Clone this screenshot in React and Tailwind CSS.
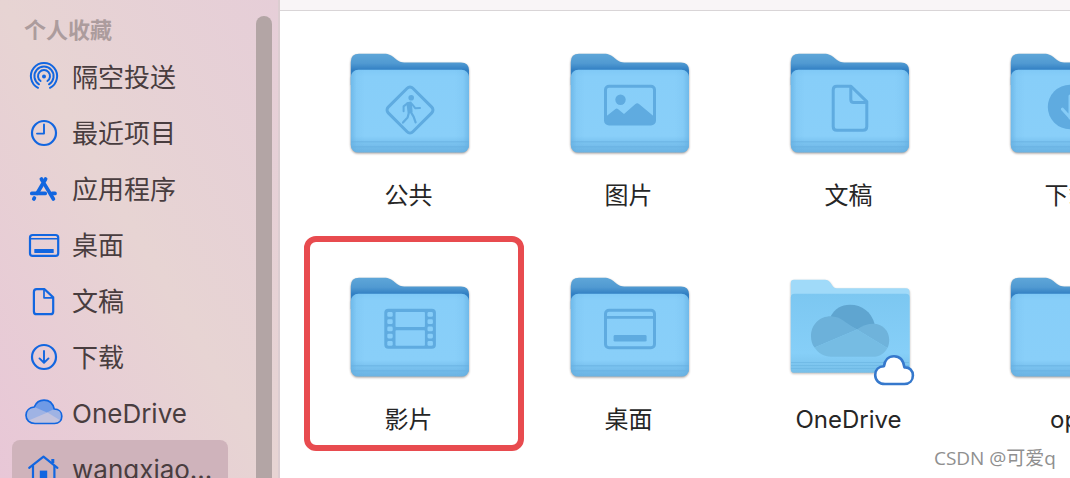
import React, { useState } from "react";
import clsx from "clsx";

const FONT =
  "font-['Inter','Noto_Sans_CJK_SC',sans-serif]";

const CLOUD =
  "M11 31.5 C5.5 31.5 2 28 2 23.3 C2 18.6 5.5 15.4 10.3 15 C12 10.8 15.5 8.2 20 8.2 C25 8.2 28.8 11.3 30.2 17 C34.8 17 37.8 20 37.8 24.2 C37.8 28.5 34.8 31.5 30.5 31.5 Z";

/* Sidebar icons, all drawn on a 40 x 40 board */
const SIDEBAR_ICONS = {
  airdrop: (
    <g strokeWidth="2">
      <path d="M14 31.8 A13.1 13.1 0 1 1 26 31.8" />
      <path d="M15 28.3 A9.6 9.6 0 1 1 25 28.3" />
      <path d="M16.6 25 A6 6 0 1 1 23.4 25" />
      <circle cx="20" cy="20.4" r="2" fill="currentColor" stroke="none" />
    </g>
  ),
  recents: (
    <g>
      <circle cx="20" cy="21" r="12" />
      <path d="M20 12.4 V21.6 H13" strokeWidth="1.9" />
    </g>
  ),
  apps: (
    <g strokeWidth="3.7">
      <path d="M21.6 11 L13.2 25.3" />
      <path d="M10.4 30 L9.8 31" />
      <path d="M17.4 11 L18.4 12.8 M20.6 16.4 L29.4 31" />
      <path d="M7.8 25.4 H21.2 M28.2 25.4 H31" />
    </g>
  ),
  desktop: (
    <g>
      <rect x="6" y="11" width="28.2" height="20.8" rx="2.6" />
      <path d="M6 14.8 H34" strokeWidth="1.6" />
      <rect x="10.3" y="25" width="19.4" height="4" rx="0.5" fill="currentColor" stroke="none" />
    </g>
  ),
  document: (
    <g>
      <path d="M12.6 9.2 H20.6 L29.2 17.4 V31.4 Q29.2 34.2 26.6 34.2 H12.6 Q9.9 34.2 9.9 31.4 V12 Q9.9 9.2 12.6 9.2 Z" />
      <path d="M20 9.6 V17.8 H28.8" strokeWidth="1.7" />
    </g>
  ),
  download: (
    <g>
      <circle cx="20" cy="21" r="12" />
      <path d="M20 15 V26.6 M15.5 22.4 L20 26.8 L24.5 22.4" strokeWidth="1.9" />
    </g>
  ),
  onedrive: (
    <g>
      <path d={CLOUD} fill="#9fb3e4" stroke="none" />
      <path d="M10.3 15 C12 10.8 15.5 8.2 20 8.2 C25 8.2 28.8 11.3 30.2 17 L23 20.5 Z" fill="#6f9ae6" stroke="none" />
      <path d="M4 28.8 L23.5 20.4 L36.5 28.4 Q34.5 31.5 30.5 31.5 H11 Q6.5 31.5 4 28.8 Z" fill="#c3c3de" stroke="none" />
      <path d={CLOUD} strokeWidth="1.7" />
    </g>
  ),
  home: (
    <g>
      <path d="M5.2 19.8 L19.5 8.6 L33.4 19.8" />
      <path d="M9 18 V36 M30.4 18 V36" />
      <path d="M28.8 15 V11" strokeWidth="3" strokeLinecap="butt" />
      <rect x="15.8" y="22.6" width="7.4" height="14" fill="currentColor" stroke="none" />
    </g>
  ),
};

const FAVORITES = [
  { icon: "airdrop", label: "隔空投送" },
  { icon: "recents", label: "最近项目" },
  { icon: "apps", label: "应用程序" },
  { icon: "desktop", label: "桌面" },
  { icon: "document", label: "文稿" },
  { icon: "download", label: "下载" },
  { icon: "onedrive", label: "OneDrive" },
  { icon: "home", label: "wangxiao..." },
];

/* Marks stamped on the folder fronts, on the folder's 120 x 104 board */
const FOLDER_MARKS = {
  walk: (
    <g>
      <rect x="42.6" y="39.6" width="34.8" height="34.8" rx="4" transform="rotate(45 60 57)" strokeWidth="3" />
      <circle cx="61.2" cy="44.8" r="2.8" fill="currentColor" stroke="none" />
      <path d="M57.4 50.2 L60.8 49.4 L61.6 58.6 L58.6 59.4 Z" fill="currentColor" strokeWidth="2" />
      <path d="M57.4 50.4 L53.6 53.4 V58.2 M62 51 L65.2 55.2 L70 55" strokeWidth="2" />
      <path d="M58.8 60 L57.6 64.4 L53 69.6 M61 59.4 L63.6 63.6 L65.6 69.4" strokeWidth="2.2" />
    </g>
  ),
  picture: (
    <g>
      <rect x="35.5" y="33.2" width="49" height="37.8" rx="3.5" strokeWidth="3" />
      <circle cx="50.5" cy="46.8" r="5.2" fill="currentColor" stroke="none" />
      <path d="M36 63.5 L45.2 56.2 Q46.8 55 48.2 56.3 L54 61 L65.4 51 Q67.2 49.6 69 51 L84 63.5 V70.5 H36 Z" fill="currentColor" stroke="none" />
    </g>
  ),
  document: (
    <g>
      <path d="M46.8 33.2 H61 L76.8 48.6 V73.4 Q76.8 77.2 73 77.2 H46.8 Q43.2 77.2 43.2 73.4 V37 Q43.2 33.2 46.8 33.2 Z" />
      <path d="M60.8 34 V46.6 Q60.8 49.6 63.8 49.6 H76" />
    </g>
  ),
  download: (
    <g>
      <circle cx="60" cy="54" r="22.2" fill="currentColor" stroke="none" />
      <path d="M60 43 V65 M52.5 56.2 L60 64.5 L67.5 56.2" stroke="#86ccf7" strokeWidth="3" />
    </g>
  ),
  film: (
    <g>
      <rect x="34.3" y="31.8" width="51.6" height="40" rx="4" fill="currentColor" stroke="none" />
      <g fill="#88cef9" stroke="none">
        {[35, 42.3, 49.5, 56.7, 64].map((y) => (
          <React.Fragment key={y}>
            <rect x="37.3" y={y} width="5.4" height="4.8" rx="1.4" />
            <rect x="77.5" y={y} width="5.4" height="4.8" rx="1.4" />
          </React.Fragment>
        ))}
        <rect x="45.5" y="35" width="29.4" height="15" rx="0.8" />
        <rect x="45.5" y="53.3" width="29.4" height="15.4" rx="0.8" />
      </g>
    </g>
  ),
  desktop: (
    <g>
      <rect x="35.5" y="33.2" width="49" height="37.6" rx="3.5" strokeWidth="3" />
      <path d="M36 40.4 H84" strokeWidth="2.6" />
      <rect x="43.6" y="58" width="33" height="6.6" rx="1.4" fill="currentColor" stroke="none" />
    </g>
  ),
};

const FOLDERS = [
  { id: "public", mark: "walk", label: "公共" },
  { id: "pictures", mark: "picture", label: "图片" },
  { id: "documents", mark: "document", label: "文稿" },
  { id: "downloads", mark: "download", label: "下载" },
  { id: "movies", mark: "film", label: "影片", marked: true },
  { id: "desktop", mark: "desktop", label: "桌面" },
  { id: "onedrive", label: "OneDrive" },
  { id: "opt", label: "opt" },
];

const FolderDefs = () => (
  <svg className="absolute size-0" aria-hidden="true">
    <defs>
      <linearGradient id="back" x1="0" y1="0" x2="0" y2="1">
        <stop offset="0" stopColor="#5ea6d8" />
        <stop offset="0.3" stopColor="#519ad2" />
        <stop offset="0.52" stopColor="#317fc3" />
        <stop offset="1" stopColor="#317fc3" />
      </linearGradient>
      <linearGradient id="front" x1="0" y1="0" x2="0" y2="1">
        <stop offset="0" stopColor="#80c9f6" />
        <stop offset="0.08" stopColor="#87cef9" />
        <stop offset="0.8" stopColor="#89cff9" />
        <stop offset="0.86" stopColor="#7dc5f2" />
        <stop offset="1" stopColor="#6ab2e2" />
      </linearGradient>
      <linearGradient id="edges" x1="0" y1="0" x2="1" y2="0">
        <stop offset="0" stopColor="#5fabdf" stopOpacity="0.6" />
        <stop offset="0.05" stopColor="#5fabdf" stopOpacity="0.12" />
        <stop offset="0.12" stopColor="#5fabdf" stopOpacity="0" />
        <stop offset="0.88" stopColor="#5fabdf" stopOpacity="0" />
        <stop offset="0.95" stopColor="#5fabdf" stopOpacity="0.12" />
        <stop offset="1" stopColor="#5fabdf" stopOpacity="0.6" />
      </linearGradient>
      <linearGradient id="cloudFront" x1="0" y1="0" x2="0" y2="1">
        <stop offset="0" stopColor="#7cc7f1" />
        <stop offset="0.75" stopColor="#86cff8" />
        <stop offset="1" stopColor="#77bfe9" />
      </linearGradient>
    </defs>
  </svg>
);

const Folder = ({ mark }) => (
  <svg
    viewBox="0 0 120 104"
    className="w-30 h-26 overflow-visible text-[#5fabe0] drop-shadow-[0_1px_1px_rgba(60,40,30,0.45)]"
    fill="none"
    stroke="currentColor"
    strokeWidth="3"
    strokeLinecap="round"
    strokeLinejoin="round"
    aria-hidden="true"
  >
    <path
      d="M0.8 32 V9 Q0.8 0.8 9 0.8 H34 C39 0.8 41.5 2.4 44.5 5 C48 8 50.5 9.6 56 9.6 H111 Q119 9.6 119 17.6 V32 Z"
      fill="url(#back)"
      stroke="none"
    />
    <rect x="0.8" y="16.8" width="118.2" height="82.8" rx="7.5" fill="url(#front)" stroke="none" />
    <rect x="0.8" y="16.8" width="118.2" height="82.8" rx="7.5" fill="url(#edges)" stroke="none" />
    <path d="M1 88.8 H119 M1 93.8 H119" stroke="#68b0e0" strokeWidth="0.8" strokeLinecap="butt" />
    {mark && FOLDER_MARKS[mark]}
  </svg>
);

const OneDriveFolder = () => (
  <svg
    viewBox="0 0 120 104"
    className="w-30 h-26 overflow-visible"
    fill="none"
    aria-hidden="true"
  >
    <g className="drop-shadow-[0_1px_1px_rgba(60,40,30,0.35)]">
      <path
        d="M0.8 92 V6 Q0.8 2.7 4 2.7 H35 Q38.5 2.7 40.3 5.6 L43 9.6 Q44.2 11.3 46.4 11.3 H116 Q119.6 11.3 119.6 15 V92 Z"
        fill="#a0daf9"
      />
      <path
        d="M0.8 20.4 Q0.8 16.7 4.5 16.7 H116 Q119.6 16.7 119.6 20.4 V92.4 Q119.6 95.8 116 95.8 H4.5 Q0.8 95.8 0.8 92.4 Z"
        fill="url(#cloudFront)"
      />
      <path d="M1 85.5 H119 M1 88.5 H119 M1 91.5 H119" stroke="#6cb6e3" strokeWidth="0.7" />
    </g>
    {/* Cloud in three tones */}
    <path d="M40.5 39.5 C44.5 32 51 27.7 60 27.7 C72 27.7 81.5 35 84.6 46.8 L67 52.6 Z" fill="#5fa5d0" />
    <path
      d="M42.5 39.4 C30 38.6 21 47.5 21 59.4 C21 63.5 22.2 67.5 24.5 70.6 L67 52.6 C58 47 53 43.2 48.6 40.8 Q46 39.6 42.5 39.4 Z"
      fill="#6cb1da"
    />
    <path d="M67 52.6 Q74.5 46.8 83.4 46.8 C92.5 46.8 99.2 54 99.2 63 C99.2 66.3 98.6 68.6 97.4 71 Z" fill="#6fb3db" />
    <path d="M24.5 70.6 L67 52.6 L97.4 71 C94.4 76.6 89.5 79.8 83 79.8 H41 C33.8 79.8 28.5 76.6 24.5 70.6 Z" fill="#76bce3" />
    {/* Sync badge */}
    <path
      d="M95 107 C89 107 85.2 103.2 85.2 98 C85.2 92.8 88.8 89.4 94 89.2 C94.6 83 98.6 79.2 104 79.2 C109.4 79.2 113.4 83 114.4 90.4 C119.6 90 122.9 93.6 122.9 98.4 C122.9 103.6 119.4 107 114.4 107 Z"
      fill="#fff"
      stroke="#3578cc"
      strokeWidth="2.6"
      strokeLinejoin="round"
    />
  </svg>
);

/**
 * Sidebar with the list of favorite places and its scrollbar.
 */
const Sidebar = ({ current, onSelect }) => (
  <aside className="flex shrink-0 justify-between w-70 pr-1.5 overflow-hidden border-r-2 border-[#dccdd1] bg-linear-to-tr from-[#e8c7d7] via-[#e7d4d3] via-50% to-[#e6ced8]">
    <nav className="w-57 pl-3" aria-label="个人收藏">
      <h2 className="h-12 pt-3.5 pl-3 text-[22px] leading-8 font-bold text-[#ac9c9d]">
        个人收藏
      </h2>
      <ul>
        {FAVORITES.map(({ icon, label }) => (
          <li key={label}>
            <button
              className={clsx(
                "flex items-center gap-2 w-full h-14 pl-3 text-[26px] whitespace-nowrap text-[#493d3f]",
                current === label && "rounded-lg bg-[#cfb3bb]"
              )}
              onClick={() => onSelect(label)}
            >
              <svg
                viewBox="0 0 40 40"
                className="size-10 shrink-0 text-[#1266e0]"
                fill="none"
                stroke="currentColor"
                strokeWidth="2.2"
                strokeLinecap="round"
                strokeLinejoin="round"
                aria-hidden="true"
              >
                {SIDEBAR_ICONS[icon]}
              </svg>
              <span className="pt-0.5">{label}</span>
            </button>
          </li>
        ))}
      </ul>
    </nav>
    <div className="w-4 mt-4 rounded-t-full bg-[#b3a5a5]" />
  </aside>
);

const App = () => {
  const [current, setCurrent] = useState("wangxiao...");

  return (
    <div className={clsx("flex h-screen overflow-hidden bg-white", FONT)}>
      <FolderDefs />
      <Sidebar current={current} onSelect={setCurrent} />
      <main className="relative flex flex-col flex-1 min-w-0 overflow-hidden">
        <div className="h-[11px] shrink-0 border-b border-[#d9d5d7] bg-[#f9f5f7]" />
        <div className="grid grid-cols-[repeat(4,220px)] gap-y-[65px] pt-[42px] pl-5">
          {FOLDERS.map(({ id, mark, label, marked }) => (
            <button
              key={id}
              className="relative flex flex-col items-center gap-[23px] text-2xl text-[#262626]"
            >
              {id === "onedrive" ? <OneDriveFolder /> : <Folder mark={mark} />}
              <span className="pr-[3px]">{label}</span>
              {/* Red frame around the folder to look at */}
              {marked && (
                <span className="absolute -top-[41px] -bottom-[15px] left-1 -right-1 rounded-xl border-6 border-[#e84b4f]" />
              )}
            </button>
          ))}
        </div>
        <p className="absolute bottom-2 right-3.5 font-['Open_Sans','Noto_Sans_CJK_SC',sans-serif] text-[19px] leading-6 text-[#8f8f8f]">
          CSDN @可爱q
        </p>
      </main>
    </div>
  );
};

export default App;
